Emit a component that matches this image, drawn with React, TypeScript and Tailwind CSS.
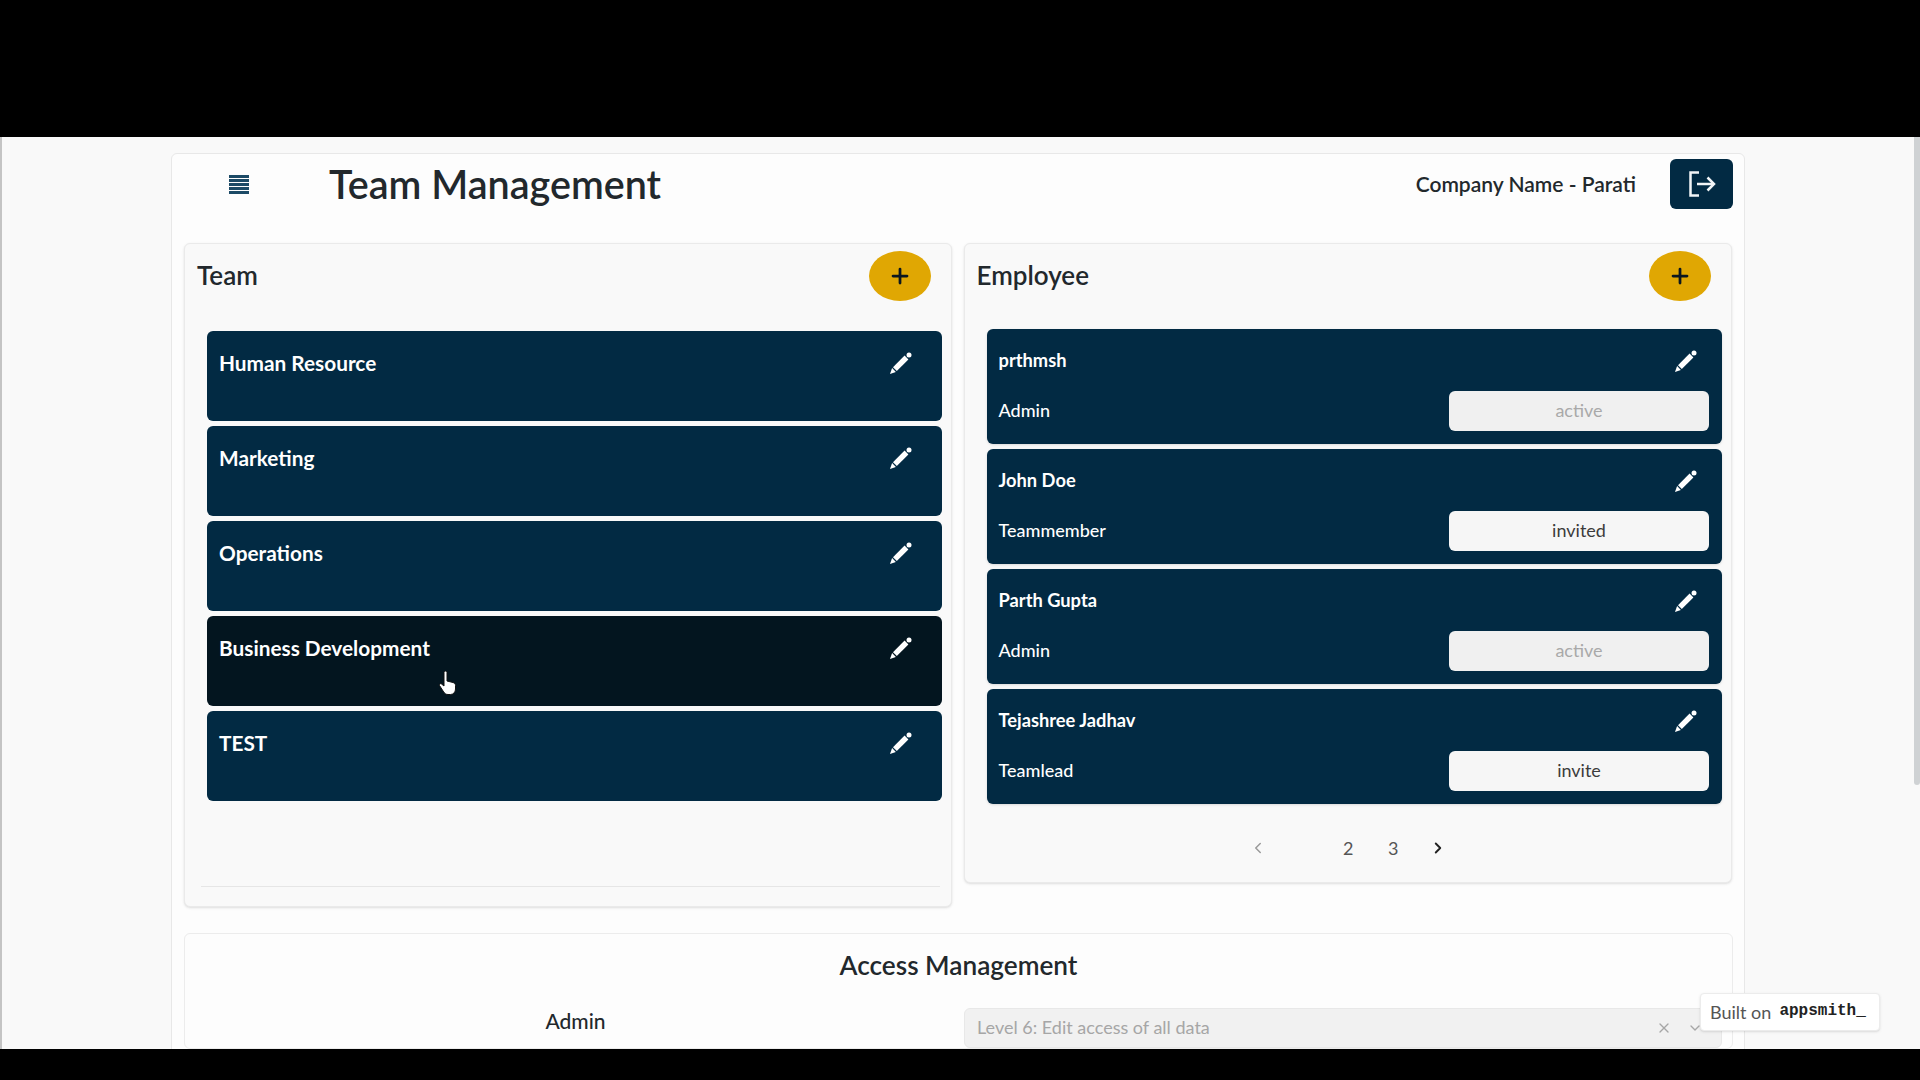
import { ChevronDown, ChevronLeft, ChevronRight, Plus, X } from 'lucide-react'

const TEAMS = ['Human Resource', 'Marketing', 'Operations', 'Business Development', 'TEST']

const EMPLOYEES = [
  { name: 'prthmsh', role: 'Admin', status: 'active', muted: true },
  { name: 'John Doe', role: 'Teammember', status: 'invited', muted: false },
  { name: 'Parth Gupta', role: 'Admin', status: 'active', muted: true },
  { name: 'Tejashree Jadhav', role: 'Teamlead', status: 'invite', muted: false },
]

const EditIcon = () => (
  <svg width="24" height="24" viewBox="0 0 24 24" className="text-white">
    <path d="M1 23l2.100-5.900 3.800 3.800L1 23z" fill="currentColor" />
    <path d="M4 16.200L15.600 4.600l3.800 3.800L7.800 20 4 16.200z" fill="currentColor" />
    <circle cx="20" cy="4" r="2.500" fill="currentColor" />
  </svg>
)

const LogoutIcon = () => (
  <svg width="28" height="26" viewBox="0 0 28 26" fill="none" stroke="#f2f5f7" strokeWidth="2.500">
    <path d="M11 1.500H2.500v23H11" />
    <path d="M9 13h16" />
    <path d="M19.500 6.500L26 13l-6.500 6.500" />
  </svg>
)

const AddButton = () => (
  <button className="w-[62px] h-[50px] rounded-[50%] bg-[#e0a703] flex items-center justify-center text-[#0b1720]">
    <Plus size={24} strokeWidth={2.75} />
  </button>
)

const Hamburger = () => (
  <div className="w-5 h-[19px] flex flex-col justify-between">
    <div className="h-[3px] bg-[#1c4a66]" />
    <div className="h-[3px] bg-[#1c4a66]" />
    <div className="h-[3px] bg-[#1c4a66]" />
    <div className="h-[3px] bg-[#1c4a66]" />
    <div className="h-[3px] bg-[#1c4a66]" />
  </div>
)

export default function App() {
  return (
    <div className="h-screen bg-black flex flex-col overflow-hidden pt-[137px] pb-[31px] font-['Lato',sans-serif] text-[#22282c]">
      <div className="relative flex-1 min-h-0 overflow-hidden bg-[#f9f9f9] border-l-2 border-[#c4c4c4] pl-[169px] pr-[175px] pt-4">
        <div className="h-[1000px] bg-[#fdfdfd] border border-[#e8e8e8] rounded-t-md px-3">
          <header className="h-[89px] flex items-center pb-[29px]">
            <div className="ml-[45px]"><Hamburger /></div>
            <h1 className="ml-[80px] text-[39.5px] font-semibold leading-none">Team Management</h1>
            <span className="ml-auto text-[21px] font-semibold">Company Name - Parati</span>
            <button className="ml-[34px] mr-[-1px] w-[63px] h-[50px] rounded-md bg-[#022a43] flex items-center justify-center">
              <LogoutIcon />
            </button>
          </header>

          <div className="flex gap-3 items-start">
            <section className="w-[768px] h-[664px] bg-[#f9f9f9] border border-[#eaeaea] rounded-md shadow-sm pt-[7px] pl-3 pr-[13px]">
              <div className="h-[50px] flex items-center justify-between pr-[7px]">
                <h2 className="text-[26px] font-semibold pb-[2px]">Team</h2>
                <AddButton />
              </div>
              <div className="h-[556px] mt-[30px] ml-[10px] mr-[-4px] flex flex-col gap-[5px] relative">
                {TEAMS.map(team => (
                  <div
                    key={team}
                    className={`h-[90px] shrink-0 rounded-md flex items-start justify-between pl-3 pr-[29px] pt-[20px] ${team === 'Business Development' ? 'bg-[#03151f]' : 'bg-[#022a43]'}`}
                  >
                    <span className="text-white text-[20.8px] font-bold leading-6">{team}</span>
                    <EditIcon />
                  </div>
                ))}
                <div className="absolute left-[232px] top-[340px] pointer-events-none">
                  <svg width="17" height="24" viewBox="0 0 17 24">
                    <path d="M5 1.500a1.500 1.500 0 0 1 3 0V10l6 1.500c1.500.4 2.500 1.400 2.500 3V18c0 3-2 5.500-5 5.500H9c-2 0-3.300-1-4.300-2.500L.5 14.500c-.6-1 .8-2.500 2-1.500L5 15V1.500z" fill="#fff" stroke="#111" strokeWidth="1" />
                  </svg>
                </div>
                <div className="mt-auto -ml-[6px] mr-[2px] border-b border-[#e6e6e6]" />
              </div>
            </section>

            <section className="w-[769px] h-[640px] bg-[#f9f9f9] border border-[#eaeaea] rounded-md shadow-sm pt-[7px] pl-3 pr-[13px]">
              <div className="h-[50px] flex items-center justify-between pr-[7px]">
                <h2 className="text-[26px] font-semibold pb-[2px]">Employee</h2>
                <AddButton />
              </div>
              <div className="mt-[28px] ml-[10px] mr-[-4px] flex flex-col gap-[5px]">
                {EMPLOYEES.map(e => (
                  <div key={e.name} className="h-[115px] rounded-md bg-[#022a43] shadow-sm pl-3 pr-[13px] pt-5 text-white">
                    <div className="flex items-center justify-between pr-[11px] h-6">
                      <span className="text-[18.3px] font-bold">{e.name}</span>
                      <EditIcon />
                    </div>
                    <div className="mt-[18px] flex items-center justify-between">
                      <span className="text-[18px] font-medium pb-[2px]">{e.role}</span>
                      <button className={`w-[260px] h-10 rounded-md text-[18px] pb-[2px] ${e.muted ? 'bg-[#f0f0f0] text-[#a9a9a9]' : 'bg-[#f6f6f6] text-[#3c3c3c]'}`}>
                        {e.status}
                      </button>
                    </div>
                  </div>
                ))}
              </div>
              <nav className="mt-[28px] pl-[2px] flex items-center justify-center text-[18px] text-[#555]">
                <span className="w-[45px] h-8 flex items-center justify-center text-[#9a9a9a]"><ChevronLeft size={18} /></span>
                <span className="w-[45px] h-8" />
                <span className="w-[45px] h-8 flex items-center justify-center">2</span>
                <span className="w-[45px] h-8 flex items-center justify-center">3</span>
                <span className="w-[45px] h-8 flex items-center justify-center text-[#222]"><ChevronRight size={18} strokeWidth={2.5} /></span>
              </nav>
            </section>
          </div>

          <section className="mt-[26px] w-[1549px] bg-[#fdfdfd] border border-[#ececec] rounded-md">
            <h2 className="pt-[15px] text-center text-[26.2px] font-semibold leading-8">Access Management</h2>
            <div className="mt-[27px] flex items-start px-[9px]">
              <div className="w-[763px] mr-[7px] pt-[1px] text-center text-[21px] font-medium leading-6">Admin</div>
              <div className="w-[758px] h-[40px] bg-[#f1f1f1] border border-[#e8e8e8] rounded-md flex items-center pl-3 pr-[18px] pb-[1px] text-[18px] text-[#a6a6a6]">
                <span>Level 6: Edit access of all data</span>
                <X size={16} className="ml-auto" />
                <ChevronDown size={16} className="ml-[15px]" />
              </div>
            </div>
          </section>
        </div>

        <div className="absolute right-[40px] top-[856px] w-[180px] h-[38px] bg-white border border-[#ececec] rounded-sm shadow-sm flex items-center pl-[9px]">
          <span className="text-[18px] text-[#555]">Built on</span>
          <span className="ml-2 font-['Liberation_Mono',monospace] text-[16px] font-bold text-[#222] leading-none mb-[2px]">appsmith_</span>
        </div>
        <div className="absolute right-0 top-0 w-[6px] h-[648px] bg-[#cfd2d4] rounded-b-sm" />
      </div>
    </div>
  )
}
